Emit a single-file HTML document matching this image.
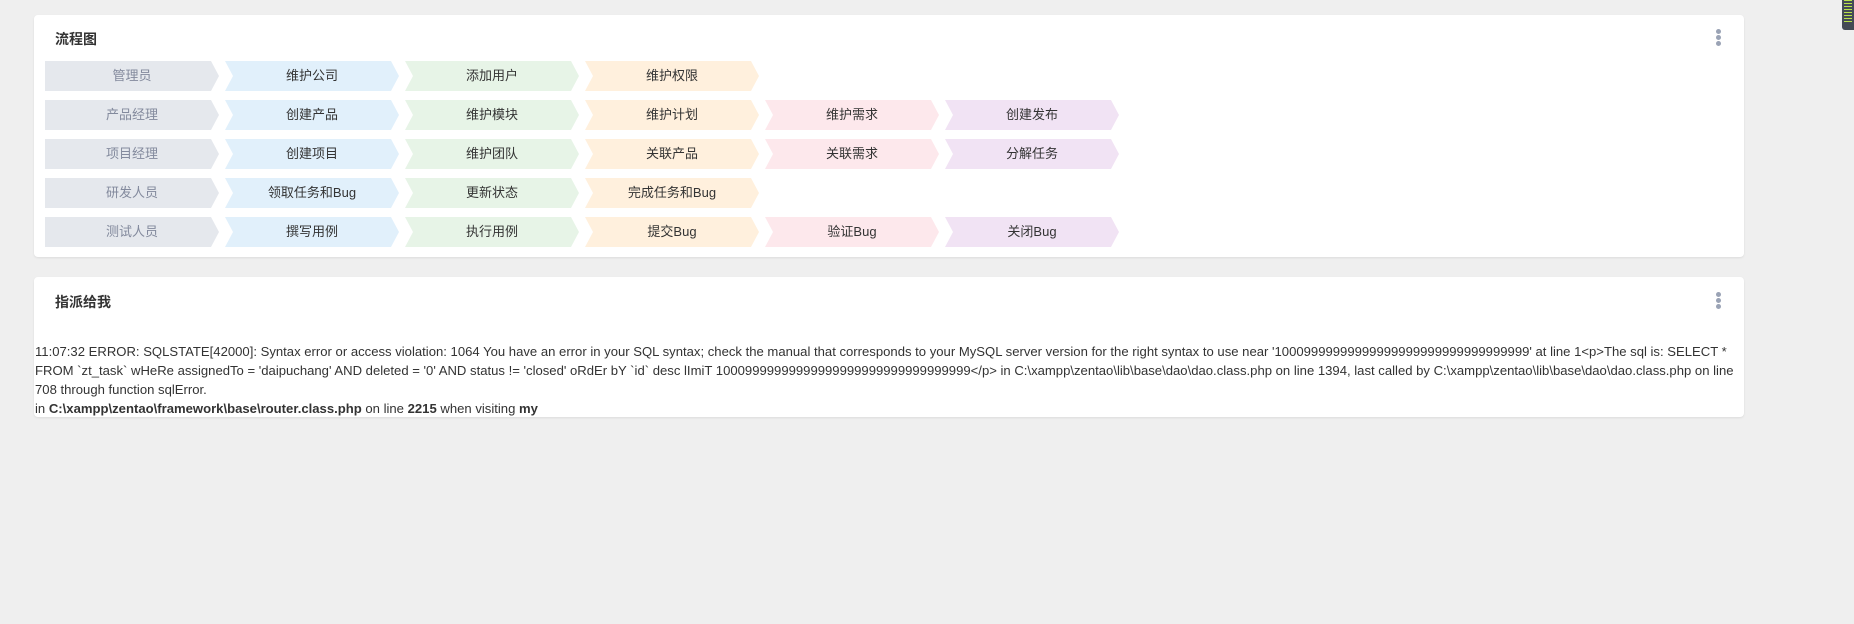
<!DOCTYPE html>
<html><head><meta charset="utf-8"><style>
body{margin:0;width:1854px;height:624px;background:#efefef;font-family:"Liberation Sans","Noto Sans CJK SC",sans-serif;position:relative;overflow:hidden}
.card{position:absolute;left:34px;width:1710px;background:#fff;border-radius:4px;box-shadow:0 1px 2px rgba(0,0,0,.08)}
.title{position:absolute;left:21px;font-weight:bold;font-size:14px;color:#333}
.dots{position:absolute;left:1682px;width:5px}
.dots i{display:block;width:5px;height:5px;border-radius:50%;background:#9aa3b5;margin-bottom:1px}
.c{position:absolute;width:174px;height:30px;line-height:30px;text-align:center;font-size:13px;color:#333;
clip-path:polygon(0 0,166px 0,174px 50%,166px 100%,0 100%,8px 50%)}
.c.f{clip-path:polygon(0 0,166px 0,174px 50%,166px 100%,0 100%);background:#e5e8ed;color:#838a9d}
.b{background:#e1f0fb}.g{background:#e7f4e7}.o{background:#fff0dd}.p{background:#fde8ec}.u{background:#f1e3f4}
.err{position:absolute;left:1px;top:65px;font-size:13.1px;line-height:19px;color:#333;white-space:nowrap}
</style></head><body>
<div style="position:absolute;left:1842px;top:0;width:12px;height:30px;background:#444a55;border-radius:0 0 0 3px"><div style="margin:0 2px;height:24px;background:repeating-linear-gradient(#b8e04a 0 1px,transparent 1px 3px)"></div></div>
<div class="card" style="top:15px;height:242px">
<div class="title" style="top:14px">流程图</div>
<div class="dots" style="top:14px"><i></i><i></i><i></i></div>
<div style="position:absolute;left:11px;top:46px">
<div class="c f" style="left:0;top:0">管理员</div><div class="c b" style="left:180px;top:0">维护公司</div><div class="c g" style="left:360px;top:0">添加用户</div><div class="c o" style="left:540px;top:0">维护权限</div>
<div class="c f" style="left:0;top:39px">产品经理</div><div class="c b" style="left:180px;top:39px">创建产品</div><div class="c g" style="left:360px;top:39px">维护模块</div><div class="c o" style="left:540px;top:39px">维护计划</div><div class="c p" style="left:720px;top:39px">维护需求</div><div class="c u" style="left:900px;top:39px">创建发布</div>
<div class="c f" style="left:0;top:78px">项目经理</div><div class="c b" style="left:180px;top:78px">创建项目</div><div class="c g" style="left:360px;top:78px">维护团队</div><div class="c o" style="left:540px;top:78px">关联产品</div><div class="c p" style="left:720px;top:78px">关联需求</div><div class="c u" style="left:900px;top:78px">分解任务</div>
<div class="c f" style="left:0;top:117px">研发人员</div><div class="c b" style="left:180px;top:117px">领取任务和Bug</div><div class="c g" style="left:360px;top:117px">更新状态</div><div class="c o" style="left:540px;top:117px">完成任务和Bug</div>
<div class="c f" style="left:0;top:156px">测试人员</div><div class="c b" style="left:180px;top:156px">撰写用例</div><div class="c g" style="left:360px;top:156px">执行用例</div><div class="c o" style="left:540px;top:156px">提交Bug</div><div class="c p" style="left:720px;top:156px">验证Bug</div><div class="c u" style="left:900px;top:156px">关闭Bug</div>
</div>
</div>
<div class="card" style="top:277px;height:140px">
<div class="title" style="top:15px">指派给我</div>
<div class="dots" style="top:15px"><i></i><i></i><i></i></div>
<div class="err">11:07:32 ERROR: SQLSTATE[42000]: Syntax error or access violation: 1064 You have an error in your SQL syntax; check the manual that corresponds to your MySQL server version for the right syntax to use near '10009999999999999999999999999999999' at line 1&lt;p&gt;The sql is: SELECT *<br>FROM `zt_task` wHeRe assignedTo = 'daipuchang' AND deleted = '0' AND status != 'closed' oRdEr bY `id` desc lImiT 10009999999999999999999999999999999&lt;/p&gt; in C:\xampp\zentao\lib\base\dao\dao.class.php on line 1394, last called by C:\xampp\zentao\lib\base\dao\dao.class.php on line<br>708 through function sqlError.<br>in <b>C:\xampp\zentao\framework\base\router.class.php</b> on line <b>2215</b> when visiting <b>my</b></div>
</div>
</body></html>
